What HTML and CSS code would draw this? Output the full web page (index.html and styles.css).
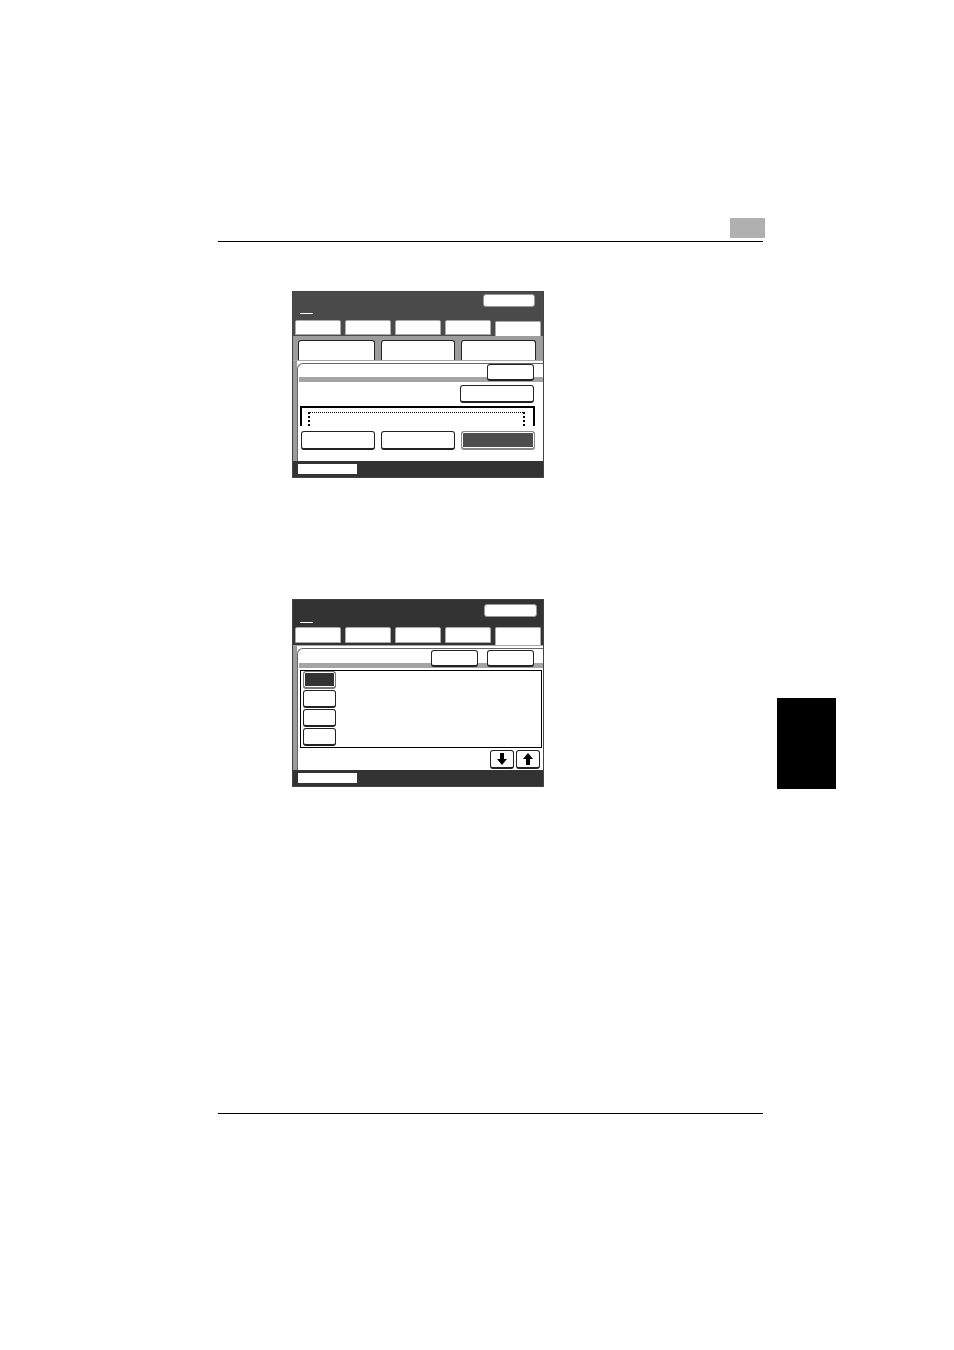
FILE: index.html
```html
<!DOCTYPE html>
<html>
<head>
<meta charset="utf-8">
<link rel="stylesheet" href="styles.css">
</head>
<body>
<div class="page">
  <div class="runhead"><div class="chapbox"></div></div>

  <div class="screen s1">
    <div class="hdr"><div class="mark"></div><div class="hbtn"></div></div>
    <div class="tabs">
      <div class="tab"></div><div class="tab"></div><div class="tab"></div><div class="tab"></div><div class="tab active"></div>
    </div>
    <div class="band">
      <div class="subtab active w1"></div><div class="subtab w2"></div><div class="subtab w3"></div>
    </div>
    <div class="panel p1">
      <div class="strip"></div>
      <div class="body">
        <div class="row-top"><div class="btn small"></div></div>
        <div class="gstrip"></div>
        <div class="btn wide"></div>
        <div class="bracket"><div class="dots"></div></div>
        <div class="btnrow">
          <div class="btn b1"></div><div class="btn b2"></div><div class="btn b3 dark"></div>
        </div>
      </div>
    </div>
    <div class="ftr"><div class="fbox"></div></div>
  </div>

  <div class="screen s2">
    <div class="hdr"><div class="mark"></div><div class="hbtn"></div></div>
    <div class="tabs">
      <div class="tab"></div><div class="tab"></div><div class="tab"></div><div class="tab"></div><div class="tab active"></div>
    </div>
    <div class="panel p2">
      <div class="strip"></div>
      <div class="body">
        <div class="row-top"><div class="btn small"></div><div class="btn small"></div></div>
        <div class="gstrip"></div>
        <div class="list">
          <div class="lbtn dark"></div><div class="lbtn"></div><div class="lbtn"></div><div class="lbtn"></div>
        </div>
        <div class="arrows">
          <div class="btn arrow"><svg width="10" height="12" viewBox="0 0 10 12"><path d="M3 0h4v6h3l-5 6-5-6h3z" fill="#000"/></svg></div>
          <div class="btn arrow"><svg width="10" height="12" viewBox="0 0 10 12"><path d="M3 12h4v-6h3l-5-6-5 6h3z" fill="#000"/></svg></div>
        </div>
      </div>
    </div>
    <div class="ftr"><div class="fbox"></div></div>
  </div>

  <div class="runfoot"></div>
  <div class="thumb"></div>
</div>
</body>
</html>
```
FILE: styles.css
```css
* { box-sizing: border-box; }
html, body { margin: 0; padding: 0; background: #fff; font-family: "Liberation Sans", Arial, sans-serif; }
.page { position: relative; width: 954px; height: 1350px; overflow: hidden; padding-top: 218px; }

.runhead { margin-left: 218px; width: 545px; height: 24px; border-bottom: 1px solid #000; display: flex; justify-content: flex-end; }
.chapbox { width: 35px; height: 20px; background: #b0b0b0; margin-right: -2px; }

.screen { margin-left: 292px; width: 252px; border: 1px solid #444; display: flex; flex-direction: column; background: #fff; }
.s1 { margin-top: 49px; height: 187px; }
.s2 { margin-top: 121px; height: 188px; }

.hdr { height: 27px; display: flex; align-items: flex-start; padding: 2px 8px 0 7px; background: #4a4a4a; }
.s2 .hdr { background: #333; padding: 4px 6px 0 7px; }
.mark { width: 13px; height: 1px; background: #fff; margin-top: 19px; }
.s2 .mark { margin-top: 18px; }
.hbtn { margin-left: auto; width: 52px; height: 13px; background: #fff; border: 1px solid #999; border-radius: 3px; }
.s2 .hbtn { width: 53px; }

.tabs { height: 17px; display: flex; align-items: flex-start; gap: 4px; padding-left: 2px; background: #4a4a4a; }
.s2 .tabs { height: 18px; background: #333; }
.tab { width: 46px; height: 15px; margin-top: 1px; background: #fff; border: 1px solid #aaa; border-radius: 2px 2px 0 0; }
.s2 .tab { height: 16px; margin-top: 0; }
.tab.active { height: 16px; margin-top: 2px; border-bottom: none; }
.s2 .tab.active { height: 18px; margin-top: 0; }

.band { height: 24px; background: #9c9c9c; display: flex; align-items: flex-start; padding: 4px 0 0 5px; gap: 7px; }
.subtab { height: 20px; background: #fff; border: 1px solid #222; border-bottom: none; border-radius: 3px 3px 0 0; }
.w1 { width: 77px; }
.w2 { width: 74px; margin-left: -1px; }
.w3 { width: 75px; margin-left: -1px; }

.panel { display: flex; border-top: 1px solid #a8a8a8; background: #fff; }
.p1 { height: 101px; }
.p2 { height: 125px; }
.strip { width: 4px; background: #9c9c9c; }
.body { flex: 1; margin-top: 2px; border-left: 1px solid #666; border-top: 1px solid #666; border-top-left-radius: 6px; display: flex; flex-direction: column; }

.btn { background: #fff; border: 1px solid #222; border-bottom-width: 2px; border-right-width: 1.5px; border-radius: 3px; }
.btn.dark { background: #4d4d4d; box-shadow: inset 0 0 0 1px #fff; border-color: #888; }

.row-top { display: flex; justify-content: flex-end; gap: 9px; padding-right: 9px; margin-top: 0; position: relative; z-index: 1; }
.p2 .row-top { margin-top: 1px; }
.btn.small { width: 47px; height: 17px; }
.gstrip { height: 5px; margin-left: 1px; margin-top: -4px; background: #a4a4a4; }
.btn.wide { align-self: flex-end; width: 74px; height: 18px; margin: 3px 9px 0 0; }

.bracket { margin: 3px 0 0 2px; width: 235px; height: 20px; border: 2px solid #000; border-bottom: none; }
.dots { margin: 4px 8px 0 6px; height: 14px; border-top: 1px dotted #000; border-left: 2px dotted #000; border-right: 2px dotted #000; }

.btnrow { display: flex; gap: 6px; margin: 5px 0 0 3px; }
.btnrow .btn { height: 19px; }
.b1 { width: 74px; }
.b2 { width: 74px; }
.b3 { width: 74px; margin-left: 0; }

.list { margin: 2px 0 0 2px; width: 242px; height: 78px; border: 1px solid #000; display: flex; flex-direction: column; gap: 1px; padding: 0 0 0 2px; }
.lbtn { width: 33px; height: 18px; background: #fff; border: 1px solid #222; border-bottom-width: 2px; border-radius: 3px; }
.lbtn.dark { background: #333; box-shadow: inset 0 0 0 1px #fff; border-color: #777; }

.arrows { display: flex; justify-content: flex-end; gap: 2px; margin: 2px 3px 0 0; }
.btn.arrow { width: 24px; height: 19px; display: flex; align-items: center; justify-content: center; }

.ftr { height: 16px; background: #333; padding: 3px 0 0 5px; }
.s2 .ftr { padding-top: 3px; }
.fbox { width: 59px; height: 10px; background: #fff; }

.runfoot { margin: 326px 0 0 218px; width: 545px; height: 1px; background: #000; }
.thumb { position: absolute; left: 777px; top: 698px; width: 59px; height: 91px; background: #000; }
```
